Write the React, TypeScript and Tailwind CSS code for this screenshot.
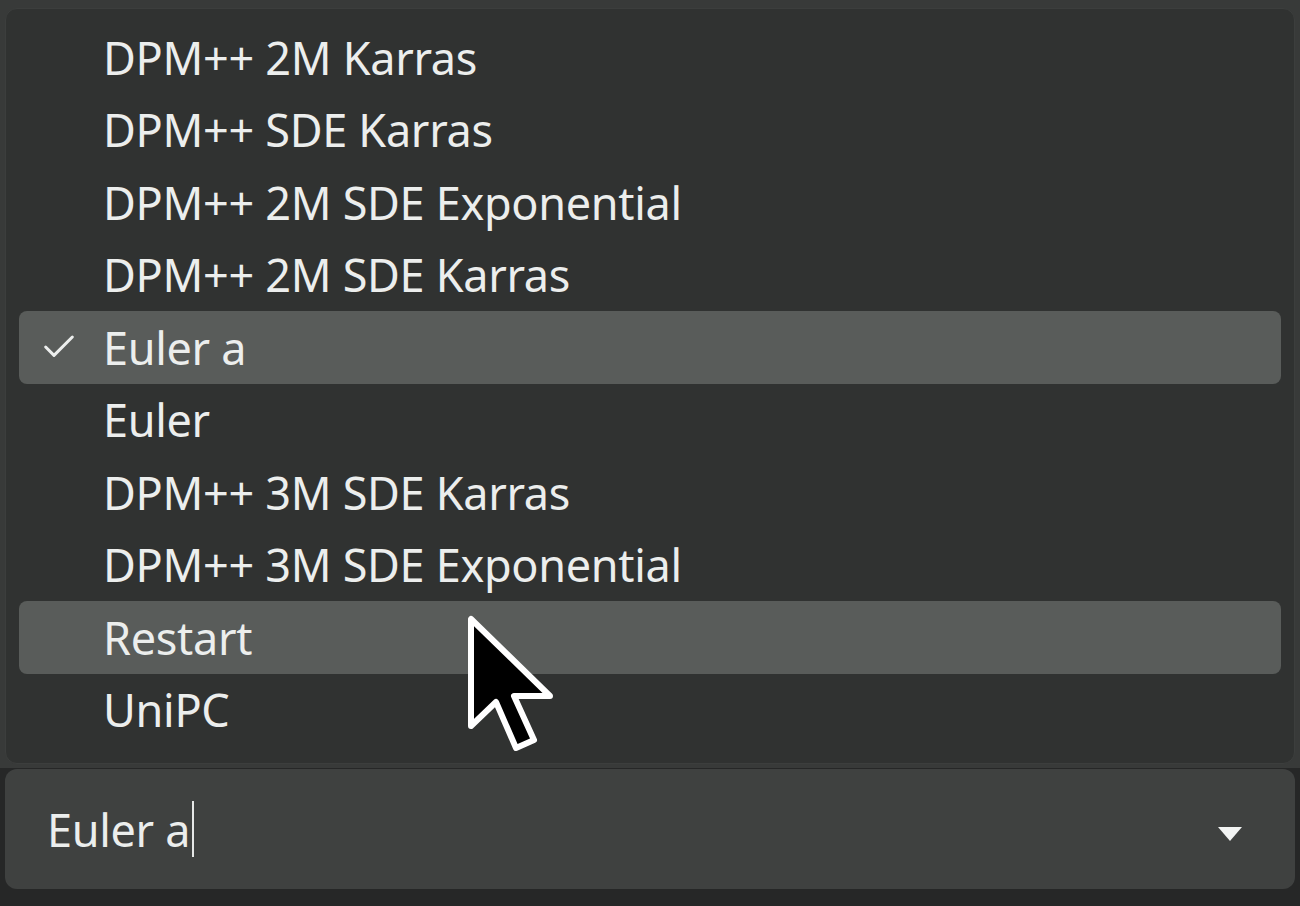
import { Check } from 'lucide-react';

const samplers = [
  'DPM++ 2M Karras',
  'DPM++ SDE Karras',
  'DPM++ 2M SDE Exponential',
  'DPM++ 2M SDE Karras',
  'Euler a',
  'Euler',
  'DPM++ 3M SDE Karras',
  'DPM++ 3M SDE Exponential',
  'Restart',
  'UniPC',
];

const selected = 'Euler a';
const hovered = 'Restart';

export default function App() {
  return (
    <div
      className="relative w-[1300px] h-[906px] overflow-hidden bg-[#262727] text-[#eceeed]"
      style={{ fontFamily: '"Noto Sans", "Open Sans", sans-serif' }}
    >
      <div className="bg-[#383a39] pt-2 px-[5px] pb-[4px]">
        {/* options list */}
        <div className="rounded-[12px] border border-[#3c3e3d] bg-[#303231] px-[13px] pt-[12px] pb-[17px]">
          {samplers.map((s) => {
            const active = s === selected || s === hovered;
            return (
              <div
                key={s}
                className={`flex items-center h-[72.5px] rounded-[8px] ${active ? 'bg-[#595c5a]' : ''}`}
              >
                <div className="w-[84px] flex justify-center pr-[4px]">
                  {s === selected && <Check size={40} strokeWidth={1.8} className="text-[#eceeed]" />}
                </div>
                <span className="text-[45px] leading-none tracking-[-0.3px]">{s}</span>
              </div>
            );
          })}
        </div>
      </div>

      {/* input */}
      <div className="px-[5px] pt-[1px]">
        <div className="flex items-center h-[120px] rounded-[12px] bg-[#3f4140] pl-[42px] pr-[52px]">
          <span className="text-[45px] leading-none tracking-[-0.3px]">Euler a</span>
          <span className="ml-[2px] w-[2px] h-[56px] bg-[#e6e8e7]" />
          <div className="flex-1" />
          <svg width="26" height="16" viewBox="0 0 26 16" className="mt-[10px]">
            <path d="M1 1 H25 L13 15 Z" fill="#f2f4f3" />
          </svg>
        </div>
      </div>

      {/* mouse pointer */}
      <svg
        className="absolute left-[466px] top-[614px]"
        width="92"
        height="142"
        viewBox="0 0 92 142"
      >
        <path
          d="M5 5 L5 112 L30 88 L50 134 L68 126 L48 82 L84 82 Z"
          fill="#000"
          stroke="#fff"
          strokeWidth="6"
          strokeLinejoin="round"
        />
      </svg>
    </div>
  );
}
